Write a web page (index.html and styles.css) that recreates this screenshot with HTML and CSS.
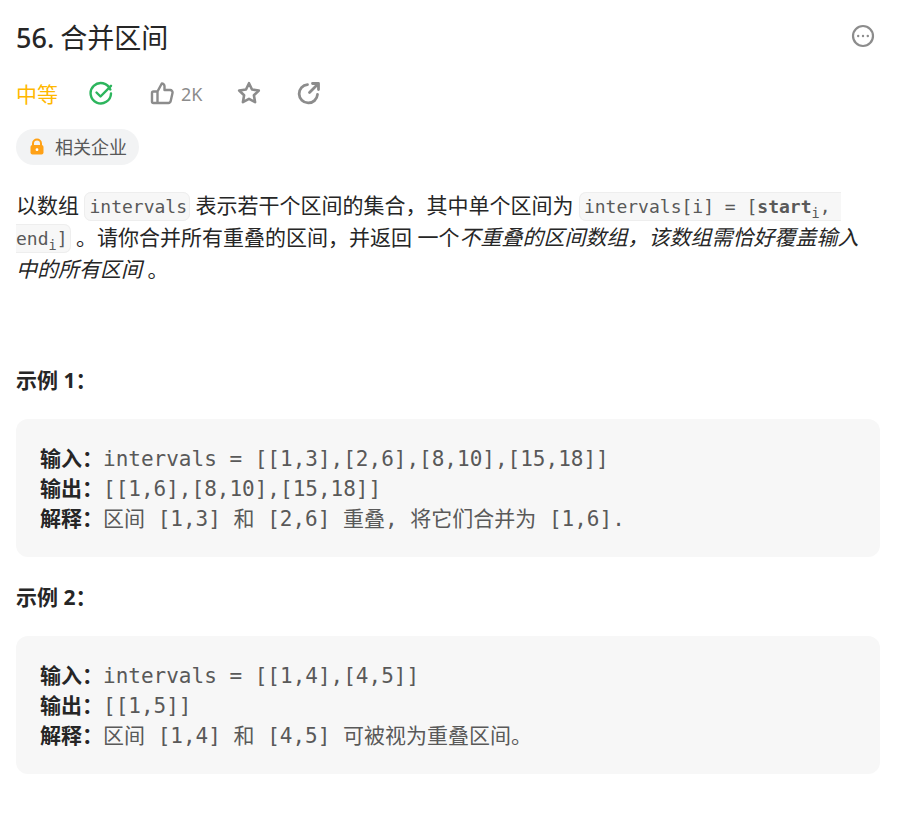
FILE: index.html
```html
<!DOCTYPE html>
<html lang="zh">
<head>
<meta charset="utf-8">
<title>56. 合并区间</title>
<link rel="stylesheet" href="styles.css">
</head>
<body>
<main class="page">
  <header class="title-row">
    <h1 class="title">56. <span class="title-cjk">合并区间</span></h1>
    <svg class="more" width="24" height="24" viewBox="0 0 24 24" fill="none" stroke="#8c8c8c" stroke-width="2.2"><circle cx="12" cy="12" r="10"/><circle cx="7.2" cy="12" r="1.200" fill="#8c8c8c" stroke="none"/><circle cx="12" cy="12" r="1.200" fill="#8c8c8c" stroke="none"/><circle cx="16.8" cy="12" r="1.200" fill="#8c8c8c" stroke="none"/></svg>
  </header>
  <div class="meta">
    <span class="difficulty">中等</span>
    <svg class="ic-check" width="24" height="24" viewBox="0 0 24 24" fill="none" stroke="#2db55d" stroke-width="2.4" stroke-linecap="round" stroke-linejoin="round"><path d="M21.3 8.5A10.2 10.2 0 1 0 22 12.5"/><path d="M7.5 11.5l4 4L22 4.8"/></svg>
    <span class="like">
      <svg width="24" height="24" viewBox="0 0 24 24" fill="none" stroke="#8c8c8c" stroke-width="2.400" stroke-linejoin="round"><path d="M7.500 10.500h-4a1.500 1.500 0 0 0-1.500 1.500v8.500a1.500 1.500 0 0 0 1.500 1.500h4zM7.500 10.500l4.300-8a2.700 2.700 0 0 1 2.700 2.800V9h5.700a2.400 2.400 0 0 1 2.300 2.900l-1.800 8.200a2.400 2.400 0 0 1-2.300 1.900H7.500"/></svg>
      <span class="like-count">2K</span>
    </span>
    <svg class="ic-star" width="24" height="24" viewBox="0 0 24 24" fill="none" stroke="#8c8c8c" stroke-width="2.600" stroke-linejoin="round"><path d="M12 2.200l3 6.300 6.800 1-4.900 4.800 1.200 6.900-6.100-3.300-6.100 3.300 1.200-6.900-4.900-4.800 6.800-1z"/></svg>
    <svg class="ic-share" width="24" height="24" viewBox="0 0 24 24" fill="none" stroke="#8c8c8c" stroke-width="2.800" stroke-linecap="round" stroke-linejoin="round"><path d="M10.500 3.600A9.200 9.200 0 1 0 20.500 13.500"/><path d="M12.500 11.500L21 3M15.500 2.500h6v6"/></svg>
  </div>
  <div class="tag-row">
    <span class="tag">
      <svg width="18" height="18" viewBox="0 0 18 18"><path d="M5 8V5.500a4 4 0 0 1 8 0V8" fill="none" stroke="#ffa116" stroke-width="2"/><rect x="2.500" y="7" width="13" height="9.500" rx="2" fill="#ffa116"/><circle cx="9" cy="11.700" r="1.400" fill="#fff"/></svg>
      <span>相关企业</span>
    </span>
  </div>
  <p class="desc">以数组 <code>intervals</code> 表示若干个区间的集合，其中单个区间为 <code>intervals[i] = [<b>start<sub>i</sub></b>, end<sub>i</sub>]</code> 。请你合并所有重叠的区间，并返回 一个<em>不重叠的区间数组，该数组需恰好覆盖输入中的所有区间</em> 。</p>
  <p class="example-title"><strong>示例 1：</strong></p>
  <pre class="example"><strong>输入：</strong>intervals = [[1,3],[2,6],[8,10],[15,18]]
<strong>输出：</strong>[[1,6],[8,10],[15,18]]
<strong>解释：</strong>区间 [1,3] 和 [2,6] 重叠, 将它们合并为 [1,6].</pre>
  <p class="example-title"><strong>示例 2：</strong></p>
  <pre class="example"><strong>输入：</strong>intervals = [[1,4],[4,5]]
<strong>输出：</strong>[[1,5]]
<strong>解释：</strong>区间 [1,4] 和 [4,5] 可被视为重叠区间。</pre>
</main>
</body>
</html>
```
FILE: styles.css
```css
html, body {
  margin: 0;
  padding: 0;
  background: #fff;
}
body {
  font-family: "Noto Sans", "Noto Sans CJK SC", sans-serif;
  color: #262626;
  font-size: 21px;
  line-height: 32px;
}
.page {
  width: 864px;
  padding: 0 28px 0 16px;
}
.title-row {
  display: flex;
  justify-content: space-between;
  align-items: center;
  height: 37px;
  padding-top: 19px;
}
.title {
  margin: 0;
  font-size: 27px;
  line-height: 37px;
  font-weight: 500;
  color: #262626;
}
.title-cjk {
  font-weight: 400;
  margin-left: -1px;
}
.more {
  margin: 0 5px 4px 0;
}
.meta {
  display: flex;
  align-items: center;
  height: 36px;
  margin-top: 20px;
}
.meta svg {
  margin-bottom: 2px;
}
.difficulty {
  color: #ffb800;
  font-size: 21px;
  width: 73px;
}
.like {
  display: flex;
  align-items: center;
  gap: 7px;
  margin-left: 37px;
  width: 65px;
}
.like-count {
  font-size: 18px;
  color: #8c8c8c;
}
.ic-star {
  margin-left: 22px;
}
.ic-share {
  margin-left: 36px;
}
.tag-row {
  display: flex;
  margin-top: 17px;
}
.tag {
  display: flex;
  align-items: center;
  gap: 9px;
  height: 36px;
  padding: 0 12px;
  border-radius: 18px;
  background: #f2f3f4;
  color: #595959;
  font-size: 18px;
}
.desc {
  margin: 24px 0 0;
  width: 860px;
}
code {
  font-family: "DejaVu Sans Mono", monospace;
  font-size: 18px;
  line-height: 0;
  color: #595959;
  background: #f7f7f7;
  border: 1px solid #eeeeee;
  border-radius: 7px;
  padding: 3px 2px 3px 4px;
  white-space: pre-wrap;
}
code sub {
  font-size: 13.500px;
  line-height: 0;
  font-weight: 400;
}
code b {
  font-weight: 700;
}
em {
  font-style: italic;
}
.example-title {
  margin: 79px 0 0;
  font-size: 21px;
  color: #262626;
}
.example-title strong {
  font-weight: 700;
}
.example {
  margin: 23px 0 0;
  padding: 25px 24px 23px;
  border-radius: 12px;
  background: #f7f7f7;
  font-family: "DejaVu Sans Mono", "Noto Sans CJK SC", monospace;
  font-size: 21px;
  line-height: 30px;
  color: #595959;
  white-space: pre-wrap;
}
.example strong {
  font-family: "Noto Sans", "Noto Sans CJK SC", sans-serif;
  color: #262626;
  font-weight: 700;
  line-height: 0;
}
.example + .example-title {
  margin-top: 24px;
}
```
